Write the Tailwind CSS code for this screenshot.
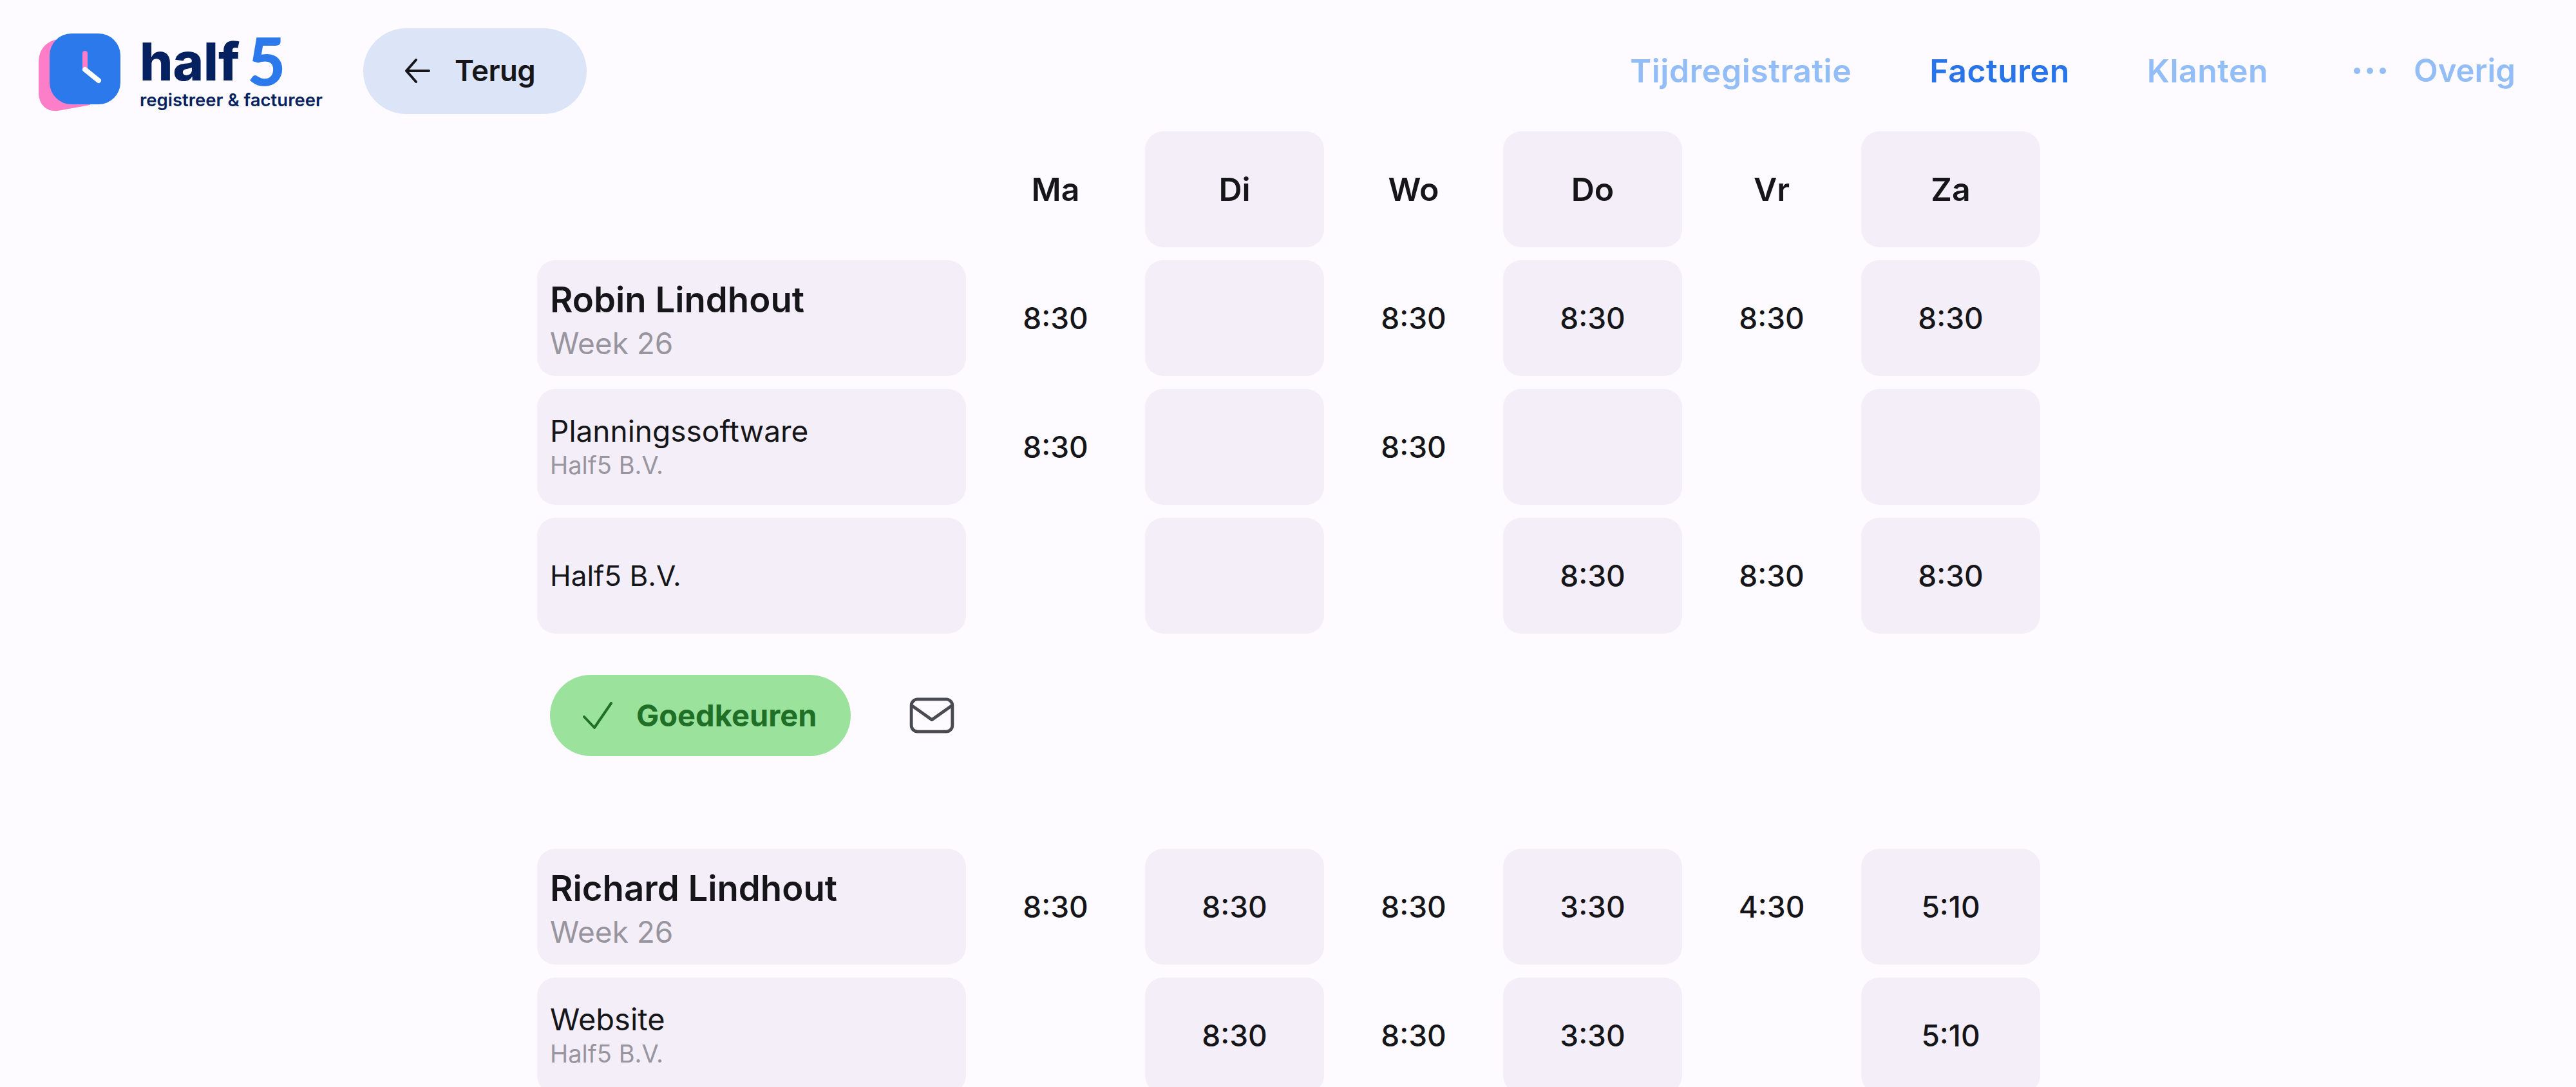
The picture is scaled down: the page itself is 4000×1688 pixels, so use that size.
<!DOCTYPE html>
<html lang="en">
<head>
  <meta charset="UTF-8">
  <meta name="viewport" content="width=device-width, initial-scale=1.0">
  <title>half5</title>
  <script src="https://cdn.jsdelivr.net/npm/@tailwindcss/browser@4"></script>
</head>
<body class="bg-[#fdfbff] font-['Inter',sans-serif] text-[#16161a]">
  <div class="h-[1688px] overflow-hidden">

    <!-- header -->
    <header class="flex items-center h-[204px] pt-[16px] pl-[60px] pr-[94px]">
      <div class="flex items-start w-[504px] h-[125px] mt-[9px]">
        <svg class="w-[132px] h-[125px] mr-[25px] shrink-0" viewBox="0 0 132 125">
          <path d="M25 10 C8 15 0 28 0 45 L0 92 C0 110 12 122 30 120 L80 111 L60 10 Z" fill="#fd7ec8"/>
          <rect x="17" y="0" width="110" height="110" rx="34" fill="#2b79ea"/>
          <path d="M72 31 L72 53" stroke="#fd7ec8" stroke-width="8" stroke-linecap="round"/>
          <path d="M72 56 L93 73" stroke="#fff" stroke-width="8" stroke-linecap="round"/>
        </svg>
        <div class="flex flex-col">
          <div class="flex items-start h-[88px]">
            <span class="font-extrabold text-[81px] leading-[88px] text-[#05215f]">half</span>
            <span class="ml-[12px] font-['Lato',sans-serif] font-black text-[102px] leading-[84px] text-[#2b79ea]">5</span>
          </div>
          <span class="font-semibold text-[27.5px] leading-[30px] text-[#05215f] whitespace-nowrap">registreer &amp; factureer</span>
        </div>
      </div>
      <button class="flex items-center gap-[38px] h-[133px] w-[347px] pl-[64px] rounded-full bg-[#dce4f8] text-[45.5px] font-semibold tracking-[-0.5px]">
        <svg class="w-[40px] h-[40px]" viewBox="0 0 40 40" fill="none" stroke="#16161a" stroke-width="4" stroke-linecap="round" stroke-linejoin="round"><path d="M38 20H3M18 3 3 20l15 17"/></svg>
        Terug
      </button>
      <nav class="ml-auto flex items-center text-[50px] font-semibold text-[#93bdf7]">
        <a class="mr-[121px] tracking-[0.5px]">Tijdregistratie</a>
        <a class="mr-[120px] tracking-[0.5px] text-[#2874e8]">Facturen</a>
        <a class="mr-[132px] tracking-[0.5px]">Klanten</a>
        <svg class="w-[52px] h-[12px] mr-[42px]" viewBox="0 0 52 12" fill="#93bdf7"><circle cx="6" cy="6" r="5"/><circle cx="26" cy="6" r="5"/><circle cx="46" cy="6" r="5"/></svg>
        <a class="text-[49px]">Overig</a>
      </nav>
    </header>

    <!-- week table -->
    <main class="pl-[834px] text-[46px] font-medium">
      <div class="grid grid-cols-[666px_repeat(6,278px)] auto-rows-[180px] gap-y-[20px] items-stretch text-center">
        <div></div>
        <div class="flex items-center justify-center font-semibold text-[50px]">Ma</div>
        <div class="flex items-center justify-center font-semibold text-[50px] rounded-[28px] bg-[#f3eef8]">Di</div>
        <div class="flex items-center justify-center font-semibold text-[50px]">Wo</div>
        <div class="flex items-center justify-center font-semibold text-[50px] rounded-[28px] bg-[#f3eef8]">Do</div>
        <div class="flex items-center justify-center font-semibold text-[50px]">Vr</div>
        <div class="flex items-center justify-center font-semibold text-[50px] rounded-[28px] bg-[#f3eef8]">Za</div>

        <div class="flex flex-col justify-center items-start pl-[20px] rounded-[28px] bg-[#f3eef8]">
          <span class="text-[54.5px] leading-[77px] font-semibold">Robin Lindhout</span>
          <span class="text-[46px] leading-[58px] font-normal text-[#98959e]">Week 26</span>
        </div>
        <div class="flex items-center justify-center">8:30</div>
        <div class="flex items-center justify-center rounded-[28px] bg-[#f3eef8]"></div>
        <div class="flex items-center justify-center">8:30</div>
        <div class="flex items-center justify-center rounded-[28px] bg-[#f3eef8]">8:30</div>
        <div class="flex items-center justify-center">8:30</div>
        <div class="flex items-center justify-center rounded-[28px] bg-[#f3eef8]">8:30</div>

        <div class="flex flex-col justify-center items-start pl-[20px] pb-[4px] rounded-[28px] bg-[#f3eef8]">
          <span class="text-[46px] leading-[60px] font-normal">Planningssoftware</span>
          <span class="text-[38px] leading-[46px] font-normal text-[#98959e]">Half5 B.V.</span>
        </div>
        <div class="flex items-center justify-center">8:30</div>
        <div class="flex items-center justify-center rounded-[28px] bg-[#f3eef8]"></div>
        <div class="flex items-center justify-center">8:30</div>
        <div class="flex items-center justify-center rounded-[28px] bg-[#f3eef8]"></div>
        <div></div>
        <div class="flex items-center justify-center rounded-[28px] bg-[#f3eef8]"></div>

        <div class="flex flex-col justify-center items-start pl-[20px] rounded-[28px] bg-[#f3eef8]">
          <span class="text-[44px] leading-[56px] font-normal">Half5 B.V.</span>
        </div>
        <div></div>
        <div class="flex items-center justify-center rounded-[28px] bg-[#f3eef8]"></div>
        <div></div>
        <div class="flex items-center justify-center rounded-[28px] bg-[#f3eef8]">8:30</div>
        <div class="flex items-center justify-center">8:30</div>
        <div class="flex items-center justify-center rounded-[28px] bg-[#f3eef8]">8:30</div>
      </div>

      <!-- actions -->
      <div class="flex items-center h-[126px] mt-[64px] mb-[144px] pl-[20px]">
        <button class="flex items-center gap-[37px] h-[126px] w-[467px] pl-[51px] rounded-full bg-[#9be29d] text-[#1f6f27] text-[47px] font-bold">
          <svg class="w-[46px] h-[42px]" viewBox="0 0 46 42" fill="none" stroke="#1f6f27" stroke-width="4" stroke-linecap="round" stroke-linejoin="round"><path d="M2 23 18 40 44 2"/></svg>
          Goedkeuren
        </button>
        <svg class="w-[70px] h-[56px] ml-[91px]" viewBox="0 0 72 58" fill="none" stroke="#4a4a52" stroke-width="5" stroke-linecap="round" stroke-linejoin="round">
          <rect x="3" y="3" width="66" height="52" rx="10"/>
          <path d="M5 14 L36 36 L67 14"/>
        </svg>
      </div>

      <div class="grid grid-cols-[666px_repeat(6,278px)] auto-rows-[180px] gap-y-[20px] items-stretch text-center">
        <div class="flex flex-col justify-center items-start pl-[20px] rounded-[28px] bg-[#f3eef8]">
          <span class="text-[54.5px] leading-[77px] font-semibold">Richard Lindhout</span>
          <span class="text-[46px] leading-[58px] font-normal text-[#98959e]">Week 26</span>
        </div>
        <div class="flex items-center justify-center">8:30</div>
        <div class="flex items-center justify-center rounded-[28px] bg-[#f3eef8]">8:30</div>
        <div class="flex items-center justify-center">8:30</div>
        <div class="flex items-center justify-center rounded-[28px] bg-[#f3eef8]">3:30</div>
        <div class="flex items-center justify-center">4:30</div>
        <div class="flex items-center justify-center rounded-[28px] bg-[#f3eef8]">5:10</div>

        <div class="flex flex-col justify-center items-start pl-[20px] pb-[4px] rounded-[28px] bg-[#f3eef8]">
          <span class="text-[47px] leading-[60px] font-normal">Website</span>
          <span class="text-[38px] leading-[46px] font-normal text-[#98959e]">Half5 B.V.</span>
        </div>
        <div></div>
        <div class="flex items-center justify-center rounded-[28px] bg-[#f3eef8]">8:30</div>
        <div class="flex items-center justify-center">8:30</div>
        <div class="flex items-center justify-center rounded-[28px] bg-[#f3eef8]">3:30</div>
        <div></div>
        <div class="flex items-center justify-center rounded-[28px] bg-[#f3eef8]">5:10</div>
      </div>
    </main>
  </div>
</body>
</html>
